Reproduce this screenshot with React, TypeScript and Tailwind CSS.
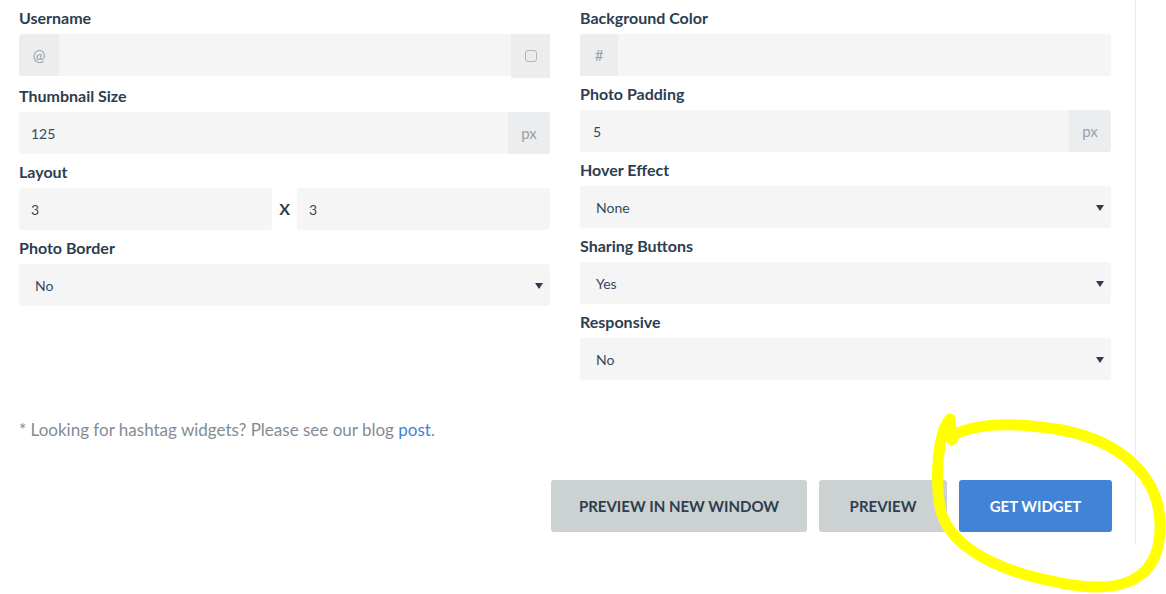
import React from 'react';

const addon = 'flex items-center justify-center bg-[#ebedef] text-[#9aa0a6] text-[15px]';
const field = 'h-[42px] bg-[#f5f5f5] flex items-center text-[14px] text-[#34495e]';

function Label({ children }: { children: React.ReactNode }) {
  return <div className="text-[16px] leading-[22px] font-bold text-[#2c3e50] mb-[5px]">{children}</div>;
}

function Select({ value }: { value: string }) {
  return (
    <div className={`${field} rounded-[3px] pl-4 pr-[6px] justify-between`}>
      <span>{value}</span>
      <svg width="8" height="7" viewBox="0 0 8 7" className="mr-[1px]">
        <polygon points="0,1 8,1 4,7" fill="#2c3e50" />
      </svg>
    </div>
  );
}

function Group({ label, children }: { label: string; children: React.ReactNode }) {
  return (
    <div className="mb-[7px]">
      <Label>{label}</Label>
      {children}
    </div>
  );
}

export default function App() {
  return (
    <div className="relative w-[1166px] h-[594px] bg-white overflow-hidden font-['Lato',sans-serif]">
      <div className="w-[1136px] border-r border-[#ececec] pl-[19px] pr-[24px] pt-[7px] pb-[13px]">
        <div className="grid grid-cols-2 gap-x-[30px]">
          {/* Left column */}
          <div className="flex flex-col">
            <Group label="Username">
              <div className="flex items-start">
                <div className={`${addon} w-[40px] h-[42px] rounded-l-[3px]`}>@</div>
                <div className={`${field} flex-1`} />
                <div className={`${addon} w-[39px] h-[44px]`}>
                  <div className="w-[12px] h-[12px] rounded-[3px] border border-[#b5b5b5] bg-[#ececec]" />
                </div>
              </div>
            </Group>
            <Group label="Thumbnail Size">
              <div className="flex">
                <div className={`${field} flex-1 pl-3 rounded-l-[3px]`}>125</div>
                <div className={`${addon} w-[42px] h-[42px] rounded-r-[3px]`}>px</div>
              </div>
            </Group>
            <Group label="Layout">
              <div className="flex items-center">
                <div className={`${field} w-[253px] pl-3 rounded-[3px]`}>3</div>
                <div className="flex-1 text-center text-[16px] font-bold text-[#2c3e50]">X</div>
                <div className={`${field} w-[253px] pl-3 rounded-[3px]`}>3</div>
              </div>
            </Group>
            <Group label="Photo Border">
              <Select value="No" />
            </Group>
          </div>

          {/* Right column */}
          <div className="flex flex-col">
            <Group label="Background Color">
              <div className="flex">
                <div className={`${addon} w-[38px] h-[42px] rounded-l-[3px]`}>#</div>
                <div className={`${field} flex-1 rounded-r-[3px]`} />
              </div>
            </Group>
            <Group label="Photo Padding">
              <div className="flex">
                <div className={`${field} flex-1 pl-[13px] rounded-l-[3px]`}>5</div>
                <div className={`${addon} w-[42px] h-[42px] rounded-r-[3px]`}>px</div>
              </div>
            </Group>
            <Group label="Hover Effect">
              <Select value="None" />
            </Group>
            <Group label="Sharing Buttons">
              <Select value="Yes" />
            </Group>
            <Group label="Responsive">
              <Select value="No" />
            </Group>
          </div>
        </div>

        <p className="mt-[30px] text-[17px] leading-[26px] text-[#828c96]">
          * Looking for hashtag widgets? Please see our blog <a className="text-[#4183d7]">post</a>.
        </p>

        <div className="mt-[37px] -mr-[1px] flex justify-end gap-3">
          <button className="w-[256px] h-[52px] rounded-[3px] bg-[#ccd1d1] text-[15px] font-bold text-[#2c3e50] uppercase">
            Preview in new window
          </button>
          <button className="w-[128px] h-[52px] rounded-[3px] bg-[#ccd1d1] text-[15px] font-bold text-[#2c3e50] uppercase">
            Preview
          </button>
          <button className="w-[153px] h-[52px] rounded-[3px] bg-[#4183d7] text-[15px] font-bold text-white uppercase">
            Get Widget
          </button>
        </div>
      </div>

      {/* hand-drawn highlight */}
      <svg className="absolute left-0 top-0 pointer-events-none" width="1166" height="594" viewBox="0 0 1166 594">
        <path
          d="M 952 440 L 950 419 C 938 432, 934 480, 941 512 C 952 548, 1000 575, 1080 586 C 1132 592, 1162 572, 1160 522 C 1158 476, 1122 442, 1062 430 C 1010 421, 972 424, 952 436"
          fill="none"
          stroke="#ffff00"
          strokeWidth="11"
          strokeLinecap="round"
          strokeLinejoin="round"
        />
      </svg>
    </div>
  );
}
